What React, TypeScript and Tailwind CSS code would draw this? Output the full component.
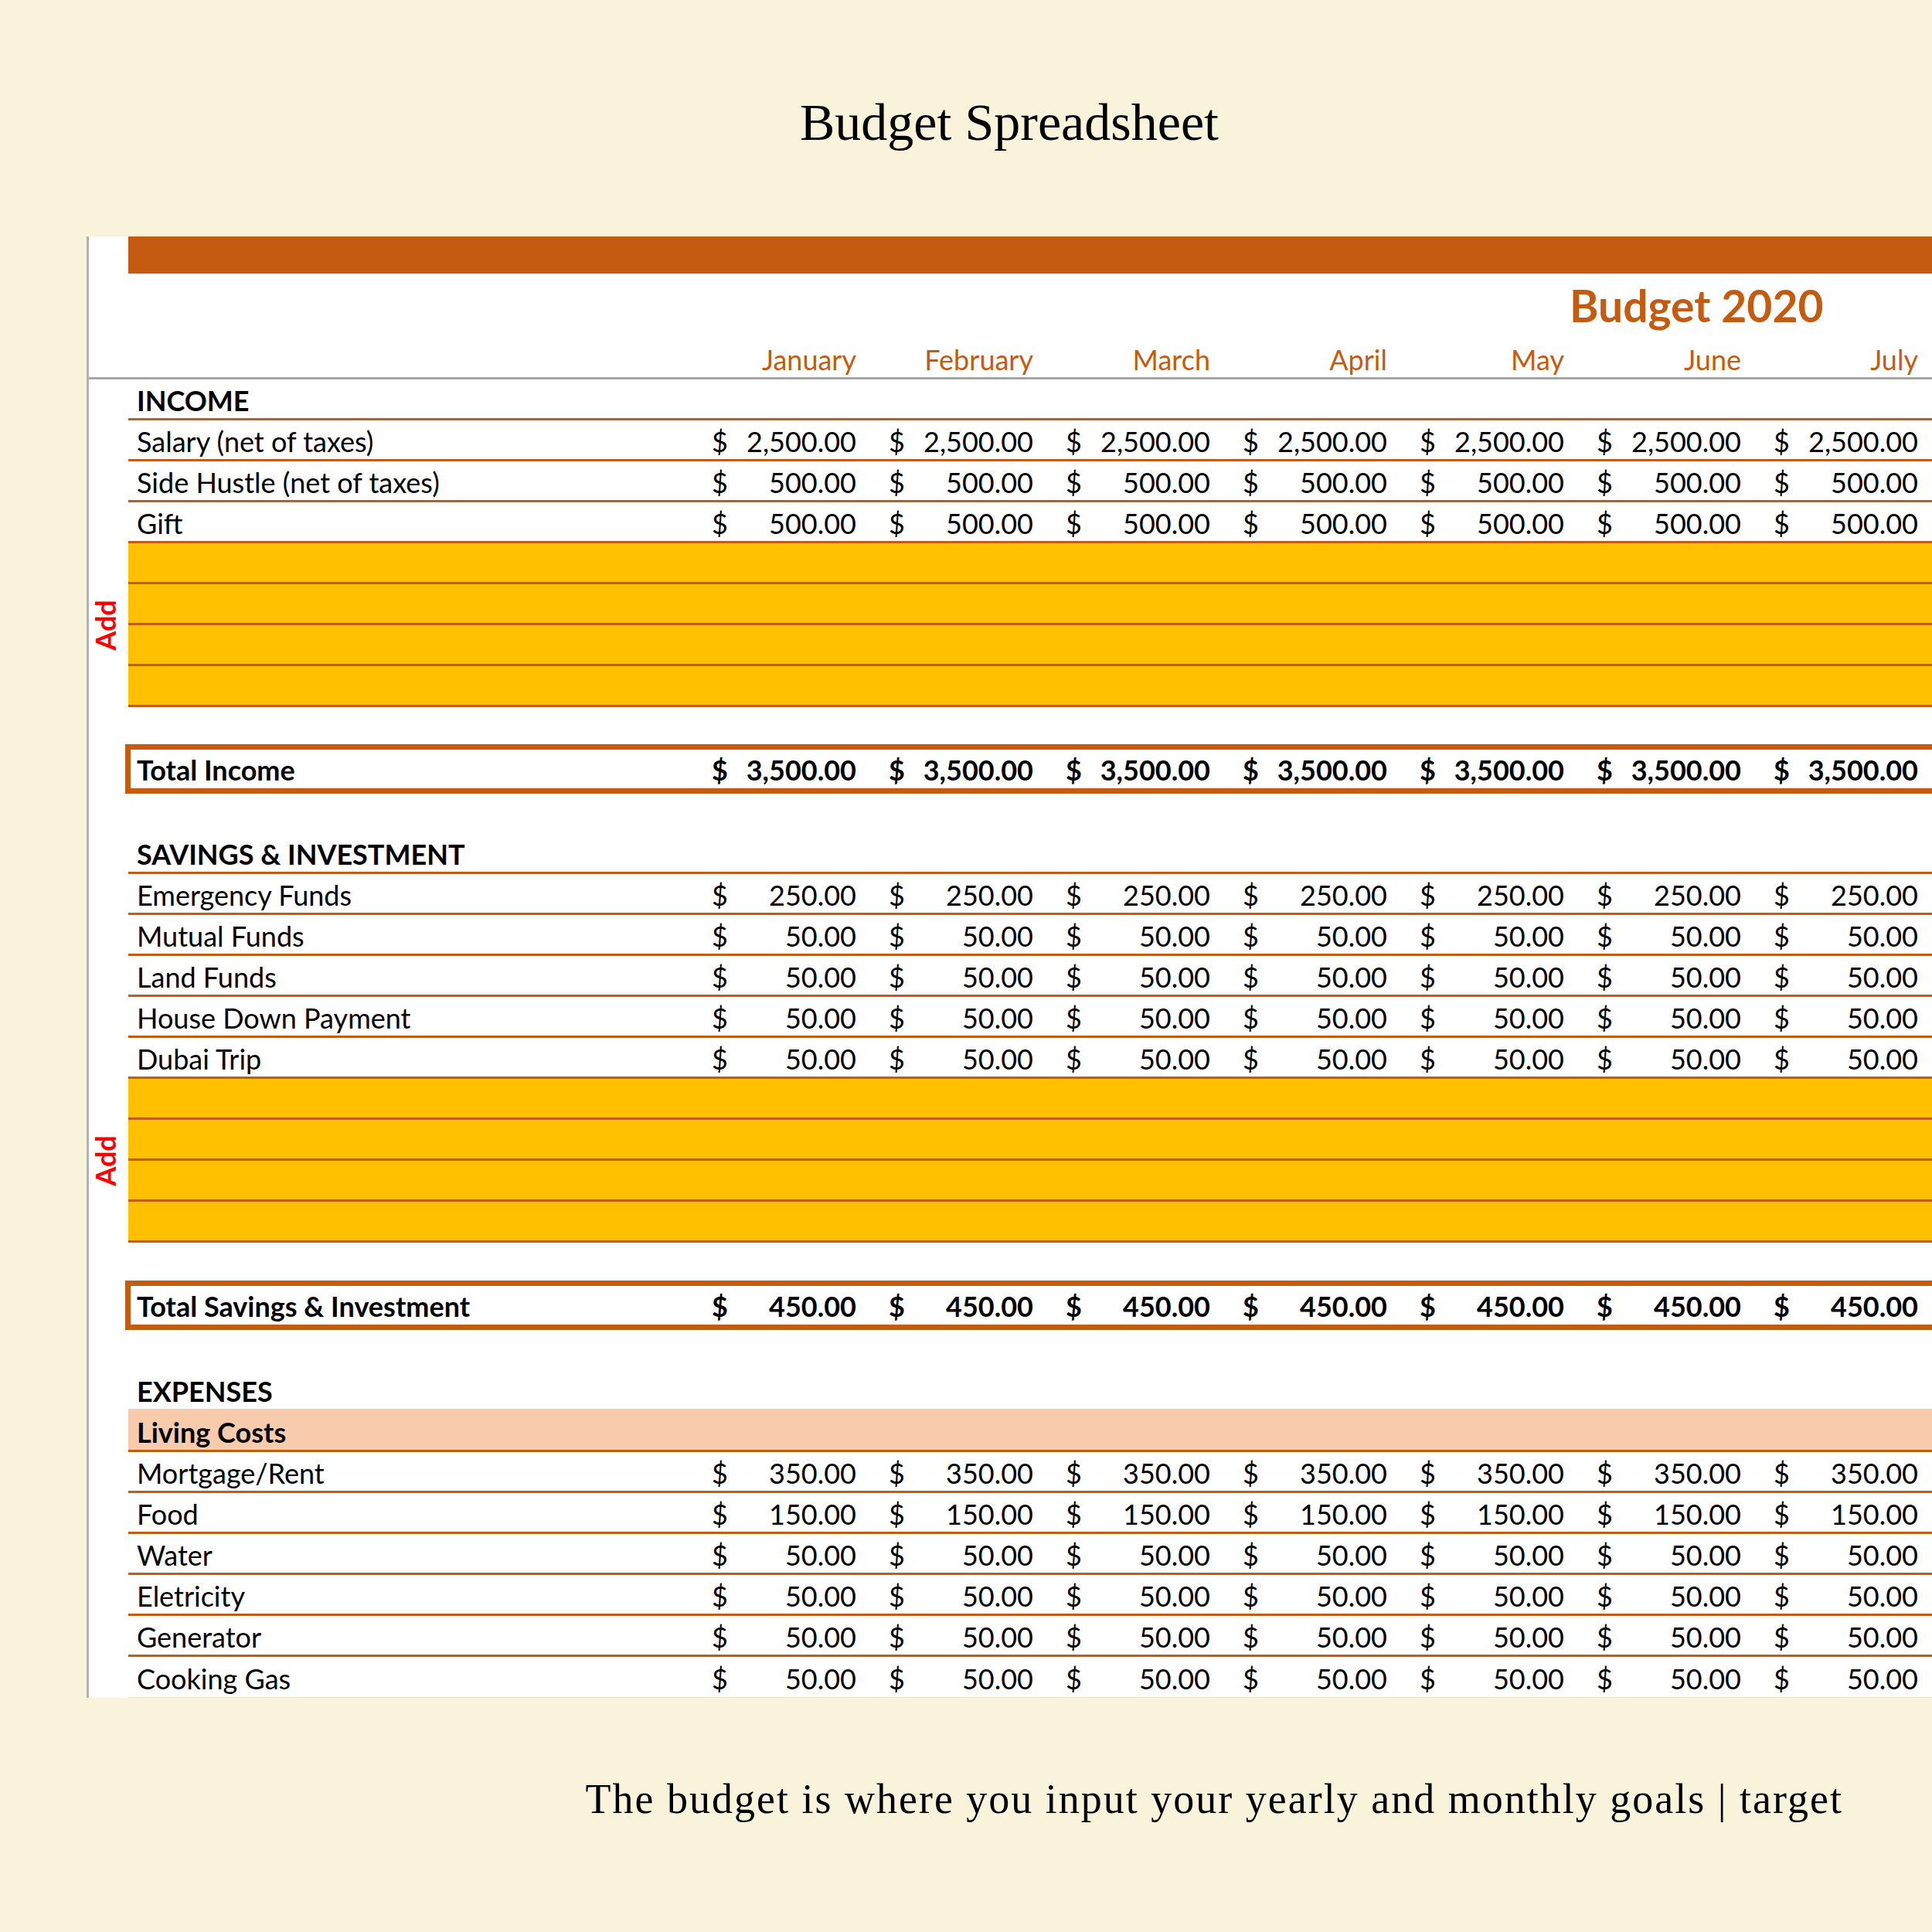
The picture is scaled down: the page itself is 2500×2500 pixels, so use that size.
import clsx from 'clsx';

const months = ['January', 'February', 'March', 'April', 'May', 'June', 'July'];

const income = [
    { label: 'Salary (net of taxes)', value: '2,500.00' },
    { label: 'Side Hustle (net of taxes)', value: '500.00' },
    { label: 'Gift', value: '500.00' },
];

const savings = [
    { label: 'Emergency Funds', value: '250.00' },
    { label: 'Mutual Funds', value: '50.00' },
    { label: 'Land Funds', value: '50.00' },
    { label: 'House Down Payment', value: '50.00' },
    { label: 'Dubai Trip', value: '50.00' },
];

const living = [
    { label: 'Mortgage/Rent', value: '350.00' },
    { label: 'Food', value: '150.00' },
    { label: 'Water', value: '50.00' },
    { label: 'Eletricity', value: '50.00' },
    { label: 'Generator', value: '50.00' },
    { label: 'Cooking Gas', value: '50.00' },
];

function Money({ value }: { value: string }) {
    return (
        <div className="flex w-[229px] shrink-0 justify-between pl-[8px] pr-[34px]">
            <span>$</span>
            <span>{value}</span>
        </div>
    );
}

function Gutter({ narrow }: { narrow?: boolean }) {
    return <div className={clsx('shrink-0', narrow ? 'w-[47px]' : 'w-[51px]')} />;
}

function Row({ label, value, last }: { label: string; value: string; last?: boolean }) {
    return (
        <div className="flex">
            <Gutter />
            <div
                className={clsx(
                    'flex h-[53px] flex-1 items-center pt-[3px]',
                    last ? 'border-b border-[#efdcc9]' : 'border-b-[3px] border-[#c55a11]'
                )}
            >
                <div className="w-[747px] shrink-0 pl-[11px]">{label}</div>
                {months.map((m) => (
                    <Money key={m} value={value} />
                ))}
            </div>
        </div>
    );
}

function SectionHeader({ title, line = true }: { title: string; line?: boolean }) {
    return (
        <div className="flex">
            <Gutter />
            <div
                className={clsx(
                    'flex flex-1 items-end pb-[5px] pl-[11px] font-bold leading-none',
                    line ? 'h-[53px] border-b-[3px] border-[#c55a11]' : 'h-[52px]'
                )}
            >
                {title}
            </div>
        </div>
    );
}

function AddBlock() {
    return (
        <div className="flex">
            <div className="flex w-[51px] shrink-0 items-center justify-center pr-[10px]">
                <span className="-rotate-90 whitespace-nowrap font-bold text-[#ff0000]">Add</span>
            </div>
            <div className="flex-1">
                {[0, 1, 2, 3].map((i) => (
                    <div key={i} className="h-[53px] border-b-[3px] border-[#c55a11] bg-[#ffc000]" />
                ))}
            </div>
        </div>
    );
}

function TotalBox({ label, value }: { label: string; value: string }) {
    return (
        <div className="flex">
            <Gutter narrow />
            <div className="flex h-[64px] flex-1 items-center border-[7px] border-[#c55a11] pt-[1px] font-bold">
                <div className="w-[744px] shrink-0 pl-[8px]">{label}</div>
                {months.map((m) => (
                    <Money key={m} value={value} />
                ))}
            </div>
        </div>
    );
}

export default function App() {
    return (
        <div className="min-h-[2500px] w-[2500px] overflow-hidden bg-[#f9f3dc] text-black">
            {/* Page title */}
            <div className="h-[306px] pl-[112px] pt-[124px] text-center font-['Liberation_Serif',serif] text-[68px] leading-none">
                Budget Spreadsheet
            </div>

            {/* Spreadsheet panel */}
            <div className="ml-[112px] w-[2388px] overflow-hidden border-l-[3px] border-[#b3b3b3] bg-white font-['Lato',sans-serif] text-[36px]">
                <div className="w-[2400px]">
                    {/* Header */}
                    <div className="border-b-[3px] border-[#a6a6a6] pl-[51px]">
                        <div className="h-[48px] bg-[#c55a11]" />
                        <div className="flex h-[86px] items-center pb-[2px] pl-[1865px] text-[57px] font-bold text-[#c55a11]">
                            Budget 2020
                        </div>
                        <div className="flex h-[48px] items-center pt-[2px] text-[#c55a11]">
                            <div className="w-[747px] shrink-0" />
                            {months.map((m) => (
                                <div key={m} className="w-[229px] shrink-0 pr-[34px] text-right">
                                    {m}
                                </div>
                            ))}
                        </div>
                    </div>

                    {/* Income */}
                    <SectionHeader title="INCOME" />
                    {income.map((r) => (
                        <Row key={r.label} label={r.label} value={r.value} />
                    ))}
                    <AddBlock />
                    <div className="h-[48px]" />
                    <TotalBox label="Total Income" value="3,500.00" />

                    {/* Savings */}
                    <div className="h-[51px]" />
                    <SectionHeader title="SAVINGS & INVESTMENT" />
                    {savings.map((r) => (
                        <Row key={r.label} label={r.label} value={r.value} />
                    ))}
                    <AddBlock />
                    <div className="h-[49px]" />
                    <TotalBox label="Total Savings & Investment" value="450.00" />

                    {/* Expenses */}
                    <div className="h-[50px]" />
                    <SectionHeader title="EXPENSES" line={false} />
                    <div className="flex">
                        <Gutter />
                        <div className="flex h-[56px] flex-1 items-center border-b-[3px] border-[#c55a11] bg-[#f8cbad] pl-[11px] pt-[6px] font-bold">
                            Living Costs
                        </div>
                    </div>
                    {living.map((r, i) => (
                        <Row key={r.label} label={r.label} value={r.value} last={i === living.length - 1} />
                    ))}
                </div>
            </div>

            {/* Caption */}
            <div className="mt-[104px] pr-[115px] text-right font-['Liberation_Serif',serif] text-[54px] leading-none tracking-[2px]">
                The budget is where you input your yearly and monthly goals | target
            </div>
        </div>
    );
}
